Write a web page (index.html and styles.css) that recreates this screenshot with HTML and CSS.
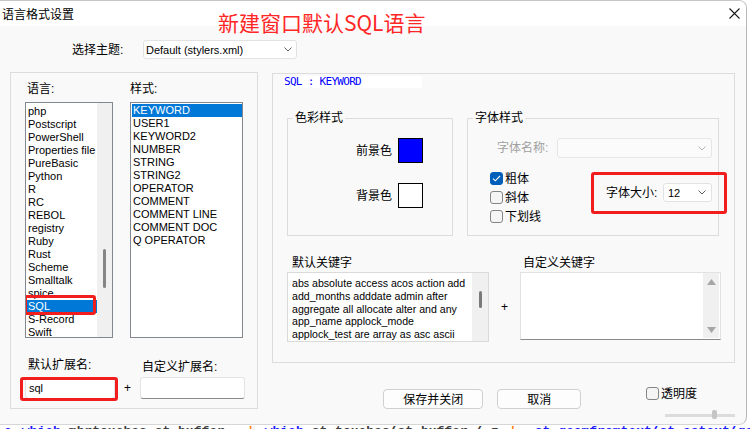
FILE: index.html
```html
<!DOCTYPE html>
<html lang="zh-CN">
<head>
<meta charset="utf-8">
<title>语言格式设置</title>
<link rel="stylesheet" href="styles.css">
</head>
<body>
<div class="dialog">
  <div class="titlebar">
    <span class="title">语言格式设置</span>
    <svg class="close" width="11" height="11" viewBox="0 0 11 11"><path d="M0.5 0.5L10.5 10.5M10.5 0.5L0.5 10.5" fill="none" stroke="#1b1b1b" stroke-width="1.1"/></svg>
  </div>
  <div class="annotation">新建窗口默认SQL语言</div>

  <div class="theme-row">
    <span class="theme-label">选择主题:</span>
    <div class="combo theme-combo"><span>Default (stylers.xml)</span><svg width="8" height="5" viewBox="0 0 8 5"><path d="M0.5 0.5L4 4L7.5 0.5" fill="none" stroke="#5f5f5f"/></svg></div>
  </div>

  <div class="main">
    <div class="left-group">
      <div class="lists">
        <div class="col">
          <div class="lbl lbl-lang">语言:</div>
          <div class="listbox lang-list">
            <div class="items">
              <div class="item">php</div>
              <div class="item">Postscript</div>
              <div class="item">PowerShell</div>
              <div class="item">Properties file</div>
              <div class="item">PureBasic</div>
              <div class="item">Python</div>
              <div class="item">R</div>
              <div class="item">RC</div>
              <div class="item">REBOL</div>
              <div class="item">registry</div>
              <div class="item">Ruby</div>
              <div class="item">Rust</div>
              <div class="item">Scheme</div>
              <div class="item">Smalltalk</div>
              <div class="item">spice</div>
              <div class="item selected sql-item">SQL<div class="redbox sql-red"></div></div>
              <div class="item">S-Record</div>
              <div class="item">Swift</div>
            </div>
            <div class="vscroll"><div class="thumb lang-thumb"></div></div>
          </div>
        </div>
        <div class="col">
          <div class="lbl">样式:</div>
          <div class="listbox style-list">
            <div class="items">
              <div class="item selected">KEYWORD</div>
              <div class="item">USER1</div>
              <div class="item">KEYWORD2</div>
              <div class="item">NUMBER</div>
              <div class="item">STRING</div>
              <div class="item">STRING2</div>
              <div class="item">OPERATOR</div>
              <div class="item">COMMENT</div>
              <div class="item">COMMENT LINE</div>
              <div class="item">COMMENT DOC</div>
              <div class="item">Q OPERATOR</div>
            </div>
          </div>
        </div>
      </div>
      <div class="ext-row">
        <div class="ext-col ext-default">
          <div class="lbl">默认扩展名:</div>
          <div class="textbox sql-box">sql<div class="redbox ext-red"></div></div>
        </div>
        <div class="plus">+</div>
        <div class="ext-col ext-custom">
          <div class="lbl">自定义扩展名:</div>
          <div class="textbox custom-box"></div>
        </div>
      </div>
    </div>

    <div class="right-col">
      <div class="right-panel">
        <div class="preview">SQL : KEYWORD</div>
        <div class="groups">
          <fieldset class="group color-group">
            <legend>色彩样式</legend>
            <div class="color-row first"><span>前景色</span><div class="swatch fg"></div></div>
            <div class="color-row"><span>背景色</span><div class="swatch bg"></div></div>
          </fieldset>
          <fieldset class="group font-group">
            <legend>字体样式</legend>
            <div class="fontname-row">
              <span class="disabled-label">字体名称:</span>
              <div class="combo disabled-combo"><svg width="8" height="5" viewBox="0 0 8 5"><path d="M0.5 0.5L4 4L7.5 0.5" fill="none" stroke="#b5b5b5"/></svg></div>
            </div>
            <div class="font-bottom">
              <div class="checks">
                <div class="check"><span class="box checked"><svg width="9" height="7" viewBox="0 0 9 7"><path d="M1 3.6L3.3 5.8L8 1" fill="none" stroke="#ffffff" stroke-width="1.1"/></svg></span>粗体</div>
                <div class="check"><span class="box"></span>斜体</div>
                <div class="check"><span class="box"></span>下划线</div>
              </div>
              <div class="size-wrap">
                <span class="size-label">字体大小:</span>
                <div class="combo size-combo"><span>12</span><svg width="8" height="5" viewBox="0 0 8 5"><path d="M0.5 0.5L4 4L7.5 0.5" fill="none" stroke="#5f5f5f"/></svg></div>
                <div class="redbox size-red"></div>
              </div>
            </div>
          </fieldset>
        </div>
        <div class="keywords">
          <div class="kw-col kw-default">
            <div class="lbl">默认关键字</div>
            <div class="kwbox">
              <div class="kw-text">
                <div>abs absolute access acos action add</div>
                <div>add_months adddate admin after</div>
                <div>aggregate all allocate alter and any</div>
                <div>app_name applock_mode</div>
                <div>applock_test are array as asc ascii</div>
              </div>
              <div class="vscroll kw-scroll"><div class="thumb kw-thumb"></div></div>
            </div>
          </div>
          <div class="plus kw-plus">+</div>
          <div class="kw-col kw-custom">
            <div class="lbl">自定义关键字</div>
            <div class="kwbox custom">
              <div class="kw-text"></div>
              <div class="arrow-scroll">
                <svg width="9" height="6" viewBox="0 0 9 6"><path d="M4.5 0L9 6H0Z" fill="#a6a6a6"/></svg>
                <svg width="9" height="6" viewBox="0 0 9 6"><path d="M0 0H9L4.5 6Z" fill="#a6a6a6"/></svg>
              </div>
            </div>
          </div>
        </div>
      </div>
      <div class="bottom-row">
        <button class="btn btn-save">保存并关闭</button>
        <button class="btn btn-cancel">取消</button>
        <div class="trans">
          <div class="check trans-check"><span class="box"></span>透明度</div>
          <div class="slider"><div class="track"></div><div class="slider-thumb"></div></div>
        </div>
      </div>
    </div>
  </div>
</div>
<div class="code-strip">
  <span class="c-blue s1">c</span><span class="c-blue s2">which</span><span class="c-dark s3">mbrtouches st_buffer</span><span class="c-orange s4">'</span><span class="c-blue s5">which</span><span class="c-dark s6">st_touches(st_buffer ( z</span><span class="c-orange s7">'</span><span class="c-blue s8">st_geomfromtext(st_astext(geometry)</span><span class="c-dark s9">st</span>
</div>
</body>
</html>
```

FILE: styles.css
```css
* { box-sizing: border-box; }

html, body {
  margin: 0;
  padding: 0;
}

body {
  width: 750px;
  height: 429px;
  overflow: hidden;
  background: #ffffff;
  font-family: "Liberation Sans", "Noto Sans CJK SC", sans-serif;
  font-size: 12px;
  color: #000;
}

.dialog {
  position: relative;
  width: 747px;
  height: 425px;
  background: #f9f9f9;
  border-top: 1px solid #c6c6c6;
  border-right: 1px solid #b8b8b8;
  border-bottom: 1px solid #d6d6d6;
  border-radius: 0 8px 8px 0;
  overflow: hidden;
}

/* title bar */
.titlebar {
  height: 25px;
  background: #ffffff;
  display: flex;
  align-items: center;
  justify-content: space-between;
  padding: 0 6px 0 2px;
}
.title {
  font-family: "Noto Sans CJK SC", sans-serif;
  font-size: 12px;
  line-height: 14px;
}
.close { display: block; }

.annotation {
  position: absolute;
  left: 218px;
  top: 11px;
  font-family: "Noto Sans CJK SC", sans-serif;
  font-size: 21px;
  line-height: 21px;
  color: #ff2626;
  white-space: nowrap;
}

/* theme row */
.theme-row {
  display: flex;
  align-items: center;
  margin-top: 14px;
  padding-left: 72px;
  height: 19px;
}
.theme-label {
  width: 71px;
  line-height: 14px;
}
.combo {
  display: flex;
  align-items: center;
  justify-content: space-between;
  background: #ffffff;
  border: 1px solid #e2e2e2;
  border-radius: 3px;
  font-size: 11px;
}
.combo svg { display: block; }
.theme-combo {
  width: 154px;
  height: 19px;
  padding: 0 4px 0 2px;
}

/* main */
.main {
  display: flex;
  align-items: flex-start;
  margin-top: 13px;
  padding-left: 10px;
}

.left-group {
  width: 248px;
  height: 337px;
  border: 1px solid #dcdcdc;
  padding: 9px 0 0 14px;
}
.lists {
  display: flex;
  gap: 17px;
}
.col {
  display: flex;
  flex-direction: column;
  gap: 6px;
}
.lbl {
  height: 14px;
  line-height: 14px;
  font-size: 12px;
  white-space: nowrap;
}
.lbl-lang { margin-left: 2px; }

.listbox {
  display: flex;
  height: 236px;
  background: #ffffff;
  border: 1px solid #828790;
  overflow: hidden;
}
.lang-list { width: 88px; }
.style-list { width: 113px; }
.items {
  flex: 1;
  min-width: 0;
}
.lang-list .items { padding-top: 2px; }
.style-list .items { padding: 1px 0 0 1px; }
.item {
  height: 13px;
  line-height: 13px;
  font-size: 11px;
  padding-left: 2px;
  white-space: nowrap;
}
.style-list .item { padding-left: 1px; }
.item.selected {
  background: #0078d7;
  color: #ffffff;
}
.sql-item { position: relative; }

.vscroll {
  width: 15px;
  background: #f0f0f0;
  display: flex;
  flex-direction: column;
}
.thumb {
  background: #858585;
  border-radius: 2px;
}
.lang-thumb {
  margin: 146px 0 0 6px;
  width: 3px;
  height: 39px;
}

.redbox {
  position: absolute;
  border: 3px solid #f21d1d;
  border-radius: 3px;
  pointer-events: none;
}
.sql-red {
  left: -2px;
  top: -5px;
  width: 72px;
  height: 20px;
}

/* extension row */
.ext-row {
  display: flex;
  align-items: flex-end;
  margin-top: 20px;
}
.ext-col {
  display: flex;
  flex-direction: column;
}
.ext-default { width: 90px; }
.ext-default .lbl { margin: 0 0 5px 3px; }
.ext-custom .lbl { margin: 0 0 3px 2px; }
.plus {
  width: 25px;
  height: 22px;
  line-height: 22px;
  text-align: center;
  font-size: 12px;
}
.textbox {
  position: relative;
  height: 22px;
  background: #ffffff;
  border: 1px solid #e4e4e4;
  border-bottom-color: #8a8a8a;
  border-radius: 3px;
  font-size: 11px;
  line-height: 20px;
  padding-left: 3px;
}
.sql-box { width: 90px; }
.custom-box { width: 105px; }
.ext-red {
  left: -6px;
  top: -1px;
  width: 98px;
  height: 24px;
}

/* right column */
.right-col {
  width: 463px;
  margin-left: 14px;
  margin-top: 1px;
}
.right-panel {
  height: 290px;
  border: 1px solid #dcdcdc;
  padding: 2px 0 0 10px;
}
.preview {
  width: 139px;
  height: 12px;
  background: #ffffff;
  color: #0000ff;
  font-family: "DejaVu Sans Mono", "Liberation Mono", monospace;
  font-size: 11px;
  letter-spacing: -0.7px;
  line-height: 12px;
  padding-left: 1px;
  white-space: pre;
}

.groups {
  display: flex;
  gap: 14px;
  margin: 23px 0 0 4px;
}
.group {
  margin: 0;
  padding: 0;
  min-width: 0;
  height: 125px;
  border: 1px solid #dcdcdc;
}
.group legend {
  padding: 0 2px;
  margin-left: 5px;
  font-size: 12px;
  line-height: 14px;
}
.color-group { width: 166px; }
.font-group { width: 252px; }

.color-row {
  display: flex;
  align-items: center;
  justify-content: flex-end;
  gap: 6px;
  padding-right: 29px;
  margin-top: 20px;
}
.color-row.first { margin-top: 13px; }
.color-row span { line-height: 14px; }
.swatch {
  width: 25px;
  height: 25px;
  border: 1px solid #000000;
}
.swatch.fg { background: #0000ff; }
.swatch.bg { background: #ffffff; }

.fontname-row {
  display: flex;
  align-items: center;
  margin-top: 13px;
  padding-left: 29px;
}
.disabled-label {
  width: 60px;
  color: #a0a0a0;
  line-height: 14px;
}
.disabled-combo {
  width: 155px;
  height: 20px;
  background: #fbfbfb;
  border-color: #e6e6e6;
  justify-content: flex-end;
  padding-right: 5px;
}

.font-bottom {
  display: flex;
  justify-content: space-between;
  align-items: flex-start;
  margin-top: 11px;
  padding: 0 6px 0 22px;
}
.checks {
  display: flex;
  flex-direction: column;
}
.check {
  display: flex;
  align-items: center;
  gap: 2px;
  height: 19px;
  line-height: 14px;
  font-size: 12px;
}
.box {
  width: 13px;
  height: 13px;
  border: 1px solid #858585;
  border-radius: 3px;
  background: #f5f5f5;
  display: flex;
  align-items: center;
  justify-content: center;
}
.box.checked {
  background: #005fb8;
  border-color: #005fb8;
}
.box svg { display: block; }

.size-wrap {
  position: relative;
  display: flex;
  align-items: center;
  margin-top: 14px;
}
.size-label {
  width: 57px;
  line-height: 14px;
}
.size-combo {
  width: 49px;
  height: 19px;
  padding: 0 5px 0 4px;
}
.size-red {
  left: -15px;
  top: -11px;
  width: 136px;
  height: 42px;
}

/* keywords */
.keywords {
  display: flex;
  margin: 20px 0 0 4px;
}
.kw-col {
  display: flex;
  flex-direction: column;
}
.kw-col .lbl {
  margin: 0 0 2px 5px;
}
.kw-custom .lbl { margin-left: 3px; }
.kw-default { width: 202px; }
.kw-custom { width: 201px; }
.kw-plus {
  width: 31px;
  height: auto;
  align-self: center;
  margin-top: 15px;
  line-height: 14px;
}
.kwbox {
  display: flex;
  height: 70px;
  background: #ffffff;
  border: 1px solid #dadada;
  overflow: hidden;
}
.kwbox.custom {
  height: 68px;
  border-color: #e2e2e2;
  border-bottom-color: #8a8a8a;
}
.kw-text {
  flex: 1;
  min-width: 0;
  padding: 4px 0 0 4px;
  font-size: 10.6px;
  line-height: 12.8px;
  white-space: nowrap;
  overflow: hidden;
}
.kw-scroll { width: 16px; }
.kw-thumb {
  margin: 18px 0 0 7px;
  width: 3px;
  height: 17px;
  background: #7a7a7a;
}
.arrow-scroll {
  width: 16px;
  margin: 0 1px 1px 0;
  background: #f0f0f0;
  display: flex;
  flex-direction: column;
  justify-content: space-between;
  align-items: center;
  padding: 6px 0 5px;
}
.arrow-scroll svg { display: block; }

/* bottom row */
.bottom-row {
  display: flex;
  align-items: flex-start;
  margin-top: 26px;
  padding-left: 111px;
}
.btn {
  height: 20px;
  padding: 0;
  margin: 0;
  background: #fdfdfd;
  border: 1px solid #d0d0d0;
  border-radius: 4px;
  font-family: "Noto Sans CJK SC", sans-serif;
  font-size: 12px;
  line-height: 16px;
  color: #000;
}
.btn-save { width: 101px; }
.btn-cancel { width: 84px; margin-left: 14px; }

.trans {
  margin: -2px 0 0 65px;
  display: flex;
  flex-direction: column;
}
.trans-check { height: 13px; }
.slider {
  position: relative;
  width: 70px;
  height: 10px;
  margin: 10px 0 0 19px;
}
.track {
  margin-top: 4px;
  height: 3px;
  background: #dcdcdc;
}
.slider-thumb {
  position: absolute;
  left: 47px;
  top: 0;
  width: 5px;
  height: 9px;
  background: #c4c4c4;
  border-radius: 2px;
}

/* editor behind the dialog */
.code-strip {
  height: 4px;
  overflow: hidden;
  display: flex;
  font-family: "Liberation Mono", monospace;
  font-weight: bold;
  font-size: 13px;
  line-height: 13px;
  white-space: nowrap;
}
.c-blue { color: #1a1aff; }
.c-dark { color: #3c3c3c; }
.c-orange { color: #ff8000; }
.s1 { margin-left: 4px; }
.s2 { margin-left: 10px; }
.s3 { margin-left: 8px; }
.s4 { margin-left: 22px; }
.s5 { margin-left: 10px; }
.s6 { margin-left: 8px; }
.s7 { margin-left: 10px; }
.s8 { margin-left: 18px; }
.s9 { margin-left: 6px; }
```
